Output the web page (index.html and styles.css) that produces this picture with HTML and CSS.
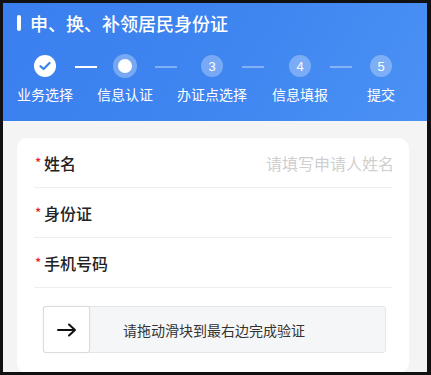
FILE: index.html
```html
<!DOCTYPE html>
<html lang="zh-CN">
<head>
    <meta charset="UTF-8">
    <meta name="viewport" content="width=device-width, initial-scale=1.0">
    <title>申、换、补领居民身份证</title>
    <link rel="stylesheet" href="styles.css">
</head>
<body>
    <div class="screen">
        <div class="header">
            <h1 class="title">申、换、补领居民身份证</h1>

            <div class="steps">
                <div class="step done">
                    <div class="dot">
                        <svg width="12" height="10" viewBox="0 0 12 10"><path d="M1.5 5.2 L4.6 8 L10.5 2" fill="none" stroke="#3b82f0" stroke-width="2.2" stroke-linecap="round" stroke-linejoin="round"/></svg>
                    </div>
                    <div class="step-name">业务选择</div>
                </div>
                <div class="step current">
                    <div class="dot"><span class="inner"></span></div>
                    <div class="step-name">信息认证</div>
                </div>
                <div class="step">
                    <div class="dot">3</div>
                    <div class="step-name">办证点选择</div>
                </div>
                <div class="step">
                    <div class="dot">4</div>
                    <div class="step-name">信息填报</div>
                </div>
                <div class="step">
                    <div class="dot">5</div>
                    <div class="step-name">提交</div>
                </div>
            </div>
        </div>

        <div class="card">
            <div class="row">
                <span class="label"><i>*</i>姓名</span>
                <span class="placeholder">请填写申请人姓名</span>
            </div>
            <div class="row">
                <span class="label"><i>*</i>身份证</span>
            </div>
            <div class="row">
                <span class="label"><i>*</i>手机号码</span>
            </div>

            <div class="slider">
                <div class="handle">
                    <svg width="20" height="14" viewBox="0 0 20 14"><path d="M1 7 H18 M12 1.5 L18 7 L12 12.5" fill="none" stroke="#111" stroke-width="2" stroke-linecap="round" stroke-linejoin="round"/></svg>
                </div>
                <div class="slider-text">请拖动滑块到最右边完成验证</div>
            </div>
        </div>
    </div>
</body>
</html>
```

FILE: styles.css
```css
body {
    margin: 0;
    background-color: #111;
    padding: 3px 4px 3px 3px;
    font-family: "Noto Sans CJK SC", "Noto Sans", sans-serif;
}
.screen {
    height: 369px;
    background-color: #f4f4f4;
    overflow: hidden;
}
.header {
    height: 118px;
    background: linear-gradient(120deg, #3a7fee 0%, #3f86f1 55%, #4b91f4 100%);
    color: white;
}
.title {
    margin: 0;
    padding: 7px 0 0 14px;
    font-size: 18px;
    font-weight: 500;
    line-height: 26px;
    display: flex;
    align-items: center;
}
.title::before {
    content: "";
    width: 4px;
    height: 16px;
    border-radius: 2px;
    background-color: white;
    margin-right: 9px;
}
.steps {
    display: grid;
    grid-template-columns: 84px 76px 98px 78px 84px;
    margin-top: 19px;
}
.step {
    position: relative;
    display: flex;
    flex-direction: column;
    align-items: center;
}
.step:not(:last-child)::after {
    content: "";
    position: absolute;
    top: 11px;
    left: calc(50% + 30px);
    width: 22px;
    height: 2px;
    background-color: rgba(255, 255, 255, 0.35);
}
.step.done::after {
    background-color: white;
}
.dot {
    width: 22px;
    height: 22px;
    border-radius: 50%;
    background-color: rgba(255, 255, 255, 0.3);
    display: flex;
    align-items: center;
    justify-content: center;
    font-family: "Liberation Sans", Arial, sans-serif;
    font-size: 13px;
    color: white;
}
.step.done .dot {
    background-color: white;
}
.step.current .dot {
    width: 24px;
    height: 24px;
    margin-top: -1px;
    margin-bottom: -1px;
}
.inner {
    width: 14px;
    height: 14px;
    border-radius: 50%;
    background-color: white;
}
.step-name {
    margin-top: 7px;
    font-size: 14px;
    line-height: 20px;
    white-space: nowrap;
}
.card {
    margin: 17px 18px 0 14px;
    background-color: white;
    border-radius: 10px;
    padding: 0 17px 20px 17px;
}
.row {
    height: 49px;
    border-bottom: 1px solid #eeeeee;
    display: flex;
    align-items: center;
    justify-content: space-between;
}
.label {
    font-size: 16px;
    font-weight: 500;
    color: #222;
    display: flex;
    align-items: center;
}
.label i {
    font-style: normal;
    color: #e5212d;
    font-size: 13px;
    width: 9px;
    margin-left: 1px;
}
.placeholder {
    font-size: 16px;
    color: #cfcfcf;
    margin-right: -2px;
}
.slider {
    margin: 18px 6px 0 9px;
    height: 45px;
    border: 1px solid #e6e6e6;
    border-radius: 3px;
    background-color: #f5f6f8;
    display: flex;
    align-items: center;
}
.handle {
    width: 45px;
    height: 45px;
    margin-left: -1px;
    background-color: white;
    border: 1px solid #dcdcdc;
    border-radius: 3px;
    display: flex;
    align-items: center;
    justify-content: center;
    box-shadow: 0 0 2px rgba(0, 0, 0, 0.08);
}
.slider-text {
    flex: 1;
    text-align: center;
    padding-right: 47px;
    font-size: 14px;
    color: #333;
}
```
